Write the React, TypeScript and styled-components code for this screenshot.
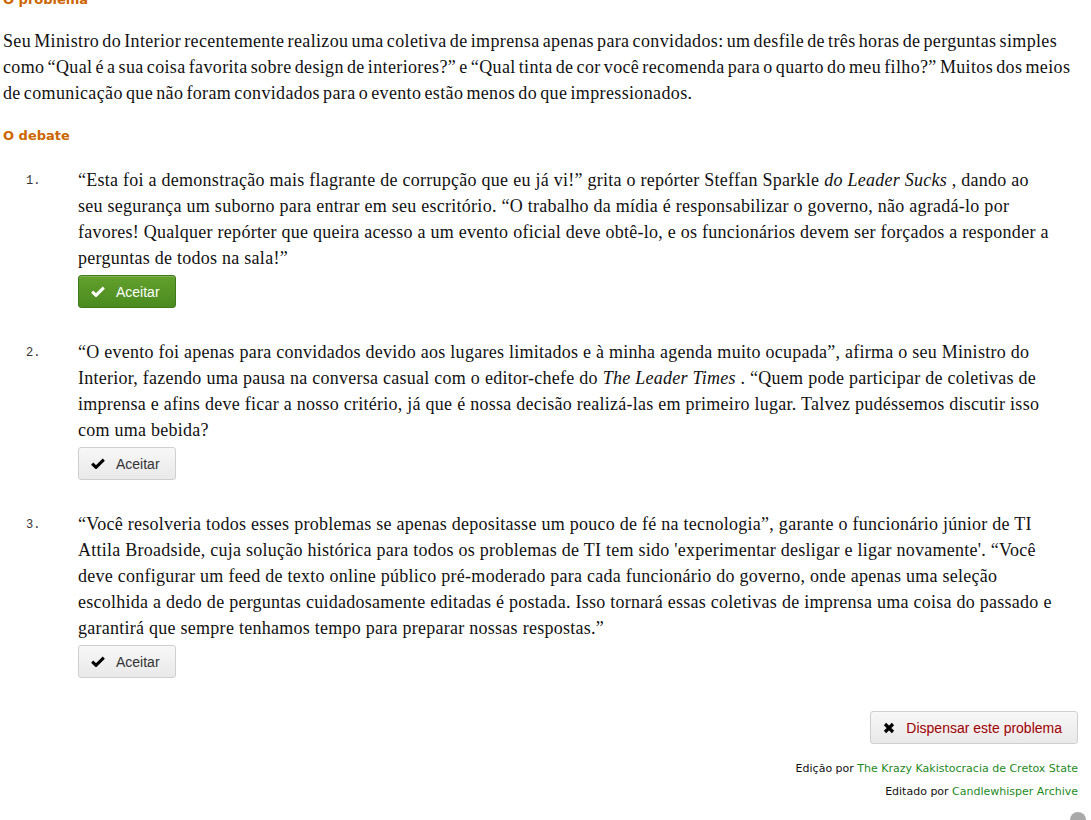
import React from "react";
import styled, { createGlobalStyle } from "styled-components";

const Global = createGlobalStyle`
  html, body { margin: 0; padding: 0; background: #fff; }
  body { overflow: hidden; }
`;

const Page = styled.div`
  padding: 0 3px;
  margin-top: -8px;
  font-family: "Liberation Serif", "DejaVu Serif", serif;
  color: #111;
`;

const Heading = styled.h3`
  font-family: "DejaVu Sans", Verdana, sans-serif;
  font-size: 13px;
  font-weight: bold;
  color: #cc6600;
  margin: 0;
  line-height: 16px;
`;

const Para = styled.p`
  font-size: 18px;
  letter-spacing: 0.36px;
  word-spacing: -1.7px;
  line-height: 26px;
  margin: 20px 10px 22px 0;
`;

const List = styled.ol`
  list-style: none;
  margin: 23px 0 0;
  padding: 0;
`;

const Item = styled.li`
  display: flex;
  margin-bottom: 31px;
`;

const Num = styled.span`
  flex: 0 0 52px;
  padding-left: 23px;
  font-family: "Liberation Mono", monospace;
  font-size: 12px;
  line-height: 26px;
  padding-top: 1px;
  color: #333;
`;

const Body = styled.div`
  flex: 1;
  padding-right: 33px;
`;

const Text = styled.div`
  font-size: 18px;
  letter-spacing: 0.26px;
  line-height: 26px;
`;

const Btn = styled.button<{ $green?: boolean; $danger?: boolean }>`
  display: inline-flex;
  align-items: center;
  gap: 11px;
  height: 33px;
  padding: 0 15px 0 12px;
  margin-top: 4px;
  border-radius: 3px;
  font-family: "Liberation Sans", Arial, sans-serif;
  font-size: 14px;
  cursor: pointer;
  border: 1px solid ${(p) => (p.$green ? "#3f7a1a" : "#cfcfcf")};
  color: ${(p) => (p.$green ? "#fff" : p.$danger ? "#a00000" : "#333")};
  background: ${(p) =>
    p.$green
      ? "linear-gradient(#62a12c, #4b8a1f)"
      : "linear-gradient(#f7f7f7, #e9e9e9)"};
  box-shadow: inset 0 1px 0 rgba(255, 255, 255, 0.2);
`;

const Footer = styled.div`
  display: flex;
  flex-direction: column;
  align-items: flex-end;
  padding-right: 10px;
  margin-top: -2px;
`;

const Credit = styled.div<{ $first?: boolean }>`
  font-family: "DejaVu Sans", Verdana, sans-serif;
  font-size: 11px;
  color: #111;
  line-height: 23px;
  margin-top: ${(p) => (p.$first ? 13 : 0)}px;
`;

const Link = styled.a`
  color: #1d8a1d;
  text-decoration: none;
`;

const ScrollTop = styled.div`
  position: fixed;
  left: 1070px;
  top: 812px;
  width: 16px;
  height: 16px;
  border-radius: 50%;
  background: #a9a9a9;
`;

const Check = ({ color }: { color: string }) => (
  <svg width="14" height="11" viewBox="0 0 14 11">
    <path d="M1.2 5.6 L5 9.4 L12.8 1.6" fill="none" stroke={color} strokeWidth="3" strokeLinejoin="miter" />
  </svg>
);

const Cross = () => (
  <svg width="12" height="12" viewBox="0 0 12 12">
    <path d="M2 2 L10 10 M10 2 L2 10" stroke="#000" strokeWidth="3.2" />
  </svg>
);

const items = [
  {
    text: (
      <>
        “Esta foi a demonstração mais flagrante de corrupção que eu já vi!” grita o repórter Steffan Sparkle{" "}
        <i>do Leader Sucks</i> , dando ao seu segurança um suborno para entrar em seu escritório. “O trabalho da mídia é
        responsabilizar o governo, não agradá-lo por favores! Qualquer repórter que queira acesso a um evento oficial
        deve obtê-lo, e os funcionários devem ser forçados a responder a perguntas de todos na sala!”
      </>
    ),
    green: true,
  },
  {
    text: (
      <>
        “O evento foi apenas para convidados devido aos lugares limitados e à minha agenda muito ocupada”, afirma o seu
        Ministro do Interior, fazendo uma pausa na conversa casual com o editor-chefe do <i>The Leader Times</i> . “Quem
        pode participar de coletivas de imprensa e afins deve ficar a nosso critério, já que é nossa decisão realizá-las
        em primeiro lugar. Talvez pudéssemos discutir isso com uma bebida?
      </>
    ),
  },
  {
    text: (
      <>
        “Você resolveria todos esses problemas se apenas depositasse um pouco de fé na tecnologia”, garante o
        funcionário júnior de TI Attila Broadside, cuja solução histórica para todos os problemas de TI tem sido
        'experimentar desligar e ligar novamente'. “Você deve configurar um feed de texto online público pré-moderado
        para cada funcionário do governo, onde apenas uma seleção escolhida a dedo de perguntas cuidadosamente editadas
        é postada. Isso tornará essas coletivas de imprensa uma coisa do passado e garantirá que sempre tenhamos tempo
        para preparar nossas respostas.”
      </>
    ),
  },
];

export default function App() {
  return (
    <>
      <Global />
      <Page>
        <Heading>O problema</Heading>
        <Para>
          Seu Ministro do Interior recentemente realizou uma coletiva de imprensa apenas para convidados: um desfile de
          três horas de perguntas simples como “Qual é a sua coisa favorita sobre design de interiores?” e “Qual tinta
          de cor você recomenda para o quarto do meu filho?” Muitos dos meios de comunicação que não foram convidados
          para o evento estão menos do que impressionados.
        </Para>
        <Heading>O debate</Heading>
        <List>
          {items.map((it, i) => (
            <Item key={i}>
              <Num>{i + 1}.</Num>
              <Body>
                <Text>{it.text}</Text>
                <Btn $green={it.green}>
                  <Check color={it.green ? "#fff" : "#000"} />
                  Aceitar
                </Btn>
              </Body>
            </Item>
          ))}
        </List>
        <Footer>
          <Btn $danger>
            <Cross />
            Dispensar este problema
          </Btn>
          <Credit $first>
            Edição por <Link>The Krazy Kakistocracia de Cretox State</Link>
          </Credit>
          <Credit>
            Editado por <Link>Candlewhisper Archive</Link>
          </Credit>
        </Footer>
      </Page>
      <ScrollTop />
    </>
  );
}
